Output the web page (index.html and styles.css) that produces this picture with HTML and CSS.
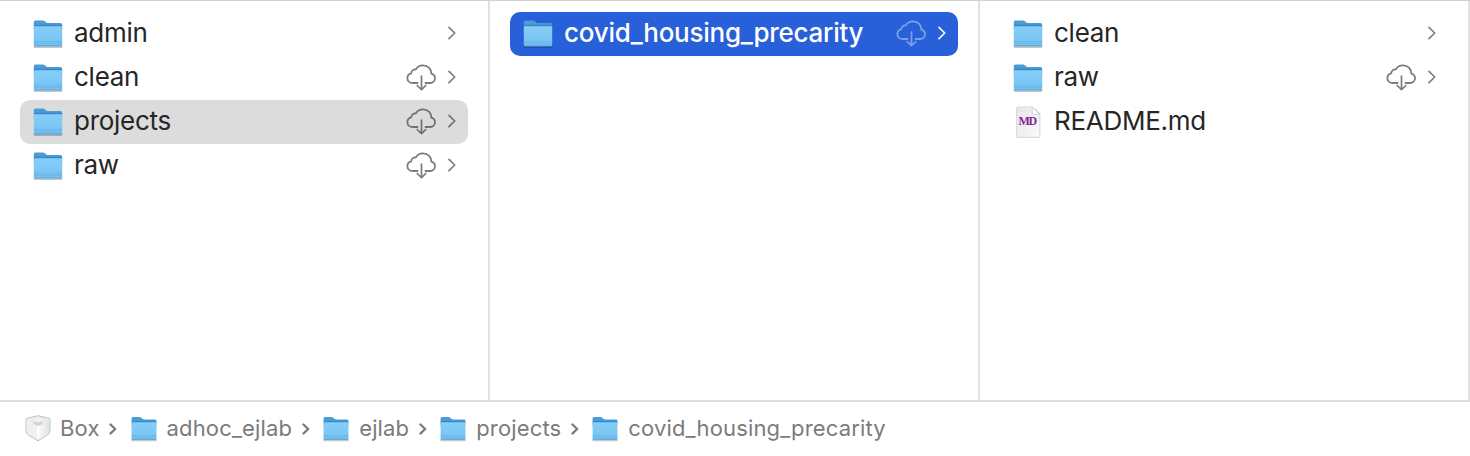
FILE: index.html
```html
<!DOCTYPE html>
<html lang="en">
<head>
<meta charset="utf-8">
<title>Finder</title>
<link rel="stylesheet" href="styles.css">
</head>
<body>
<svg class="defs" aria-hidden="true">
  <defs>
    <linearGradient id="front" x1="0" y1="0" x2="0" y2="1">
      <stop offset="0" stop-color="#85cef9"/><stop offset="1" stop-color="#76c1f1"/>
    </linearGradient>
    <linearGradient id="paper" x1="0" y1="0" x2="1" y2="1">
      <stop offset="0" stop-color="#e6e6e6"/><stop offset="1" stop-color="#fafafa"/>
    </linearGradient>
    <linearGradient id="boxright" x1="0" y1="0" x2="1" y2="0">
      <stop offset="0" stop-color="#fafafa"/><stop offset="1" stop-color="#e2e2e2"/>
    </linearGradient>
    <symbol id="folder" viewBox="0 0 32 32">
      <path d="M1.500 27.500h29v1.600q0 .8-1 .8H2.500q-1 0-1-.8z" fill="#000" opacity=".22"/>
      <path d="M1.800 4.200q0-1.800 1.600-1.800h7.400q1 0 1.800.7l1.700 1.300q.7.600 1.700.6h12.400q1.800 0 1.800 1.700V12H1.800z" fill="#4b9bd6"/>
      <path d="M2.200 6.800h27.600v2H2.200z" fill="#3987ca"/>
      <path d="M1.800 9.500q0-1.200 1.200-1.200h26q1.200 0 1.200 1.200v17.300q0 1.500-1.500 1.500H3.300q-1.500 0-1.500-1.500z" fill="url(#front)"/>
      <path d="M1.800 23.600h28.400M2 25.600h28" stroke="#5ba9df" stroke-width=".5"/>
      <path d="M2.300 27.900h27.400" stroke="#529fd3" stroke-width=".9"/>
    </symbol>
    <symbol id="cloud" viewBox="0 0 30 27">
      <path d="M11.500 19H7C3.600 19 1.400 17 1.400 14.200C1.400 11.800 3 9.900 5.200 9.400C5.200 6.900 7.500 5.100 9.700 5.500C11 3 13.800 1.300 17 1.300C21.800 1.300 25.300 5 25.300 9.600C27.500 10.200 29 12 29 14.300C29 17 26.900 19 24.100 19H19.500" fill="none" stroke="currentColor" stroke-width="1.800" stroke-linecap="round" stroke-linejoin="round"/>
      <path d="M15.500 12.200V25.300M11.200 21.500L15.500 25.600L19.800 21.500" fill="none" stroke="currentColor" stroke-width="1.700" stroke-linecap="round" stroke-linejoin="round"/>
    </symbol>
    <symbol id="chevron" viewBox="0 0 8 14">
      <path d="M1 1.300L6.700 7L1 12.700" fill="none" stroke="currentColor" stroke-width="1.700" stroke-linecap="round" stroke-linejoin="round"/>
    </symbol>
    <symbol id="crumb-chevron" viewBox="0 0 8 12">
      <path d="M1.500 1.500L6.200 6L1.500 10.500" fill="none" stroke="currentColor" stroke-width="2.400" stroke-linecap="round" stroke-linejoin="round"/>
    </symbol>
    <symbol id="document" viewBox="0 0 32 32">
      <path d="M4.300 2h24v28.400q0 1.300-1.300 1.300H5.500q-1.200 0-1.200-1.300z" fill="#000" opacity=".2"/>
      <path d="M4.700 1.800q0-1 1-1h14.500l7.500 7.500v21.700q0 1.200-1.200 1.200H5.900q-1.200 0-1.200-1.200z" fill="url(#paper)" stroke="#d2d2d2" stroke-width=".5"/>
      <path d="M20.700 0h8.300v8.200z" fill="#fff"/>
      <path d="M20.200.8v6q0 1.500 1.500 1.500h6z" fill="#fff" stroke="#c4c4c4" stroke-width=".7"/>
      <text class="doc-label" x="6.600" y="18.500" textLength="17.500" lengthAdjust="spacing">MD</text>
    </symbol>
    <symbol id="box" viewBox="0 0 26 27">
      <path d="M1 4.300Q1 3.600 2 3.300L11.500 1Q13 .6 14.500 1L24 3.300Q25 3.600 25 4.300V15.500Q25 18.500 22.500 20L13 25.800L3.500 20Q1 18.500 1 15.500z" fill="#f3f3f3" stroke="#bdbdbd" stroke-width="1" stroke-linejoin="round"/>
      <path d="M1.800 5.200L13 10V24.800L4 19.400Q1.800 18 1.800 15.500z" fill="#f0f0f0"/>
      <path d="M24.200 5.200L13 10V24.800L22 19.400Q24.200 18 24.200 15.500z" fill="url(#boxright)"/>
      <path d="M1.800 4.700L13 1.500L24.200 4.700L13 10z" fill="#e9e9e9"/>
      <ellipse cx="13" cy="5" rx="4.300" ry="1.800" fill="#f2f2f2"/>
      <path d="M8.700 6v3L13 11l4.300-2V6q-4.300 2.500-8.600 0z" fill="#d2d2d2"/>
      <path d="M13 11v12" stroke="#fff" stroke-width="1.500"/>
    </symbol>
  </defs>
</svg>
<main class="finder">
  <div class="columns">
    <section class="column">
      <div class="row"><svg class="icon"><use href="#folder"/></svg><span class="name">admin</span><svg class="chevron"><use href="#chevron"/></svg></div>
      <div class="row"><svg class="icon"><use href="#folder"/></svg><span class="name">clean</span><svg class="cloud"><use href="#cloud"/></svg><svg class="chevron"><use href="#chevron"/></svg></div>
      <div class="row current"><svg class="icon"><use href="#folder"/></svg><span class="name">projects</span><svg class="cloud"><use href="#cloud"/></svg><svg class="chevron"><use href="#chevron"/></svg></div>
      <div class="row"><svg class="icon"><use href="#folder"/></svg><span class="name">raw</span><svg class="cloud"><use href="#cloud"/></svg><svg class="chevron"><use href="#chevron"/></svg></div>
    </section>
    <section class="column">
      <div class="row selected"><svg class="icon"><use href="#folder"/></svg><span class="name">covid_housing_precarity</span><svg class="cloud"><use href="#cloud"/></svg><svg class="chevron"><use href="#chevron"/></svg></div>
    </section>
    <section class="column">
      <div class="row"><svg class="icon"><use href="#folder"/></svg><span class="name">clean</span><svg class="chevron"><use href="#chevron"/></svg></div>
      <div class="row"><svg class="icon"><use href="#folder"/></svg><span class="name">raw</span><svg class="cloud"><use href="#cloud"/></svg><svg class="chevron"><use href="#chevron"/></svg></div>
      <div class="row"><svg class="icon"><use href="#document"/></svg><span class="name">README.md</span></div>
    </section>
  </div>
  <nav class="pathbar">
    <svg class="box"><use href="#box"/></svg><span class="crumb">Box</span><svg class="sep"><use href="#crumb-chevron"/></svg>
    <svg class="small-folder"><use href="#folder"/></svg><span class="crumb">adhoc_ejlab</span><svg class="sep"><use href="#crumb-chevron"/></svg>
    <svg class="small-folder"><use href="#folder"/></svg><span class="crumb">ejlab</span><svg class="sep"><use href="#crumb-chevron"/></svg>
    <svg class="small-folder"><use href="#folder"/></svg><span class="crumb">projects</span><svg class="sep"><use href="#crumb-chevron"/></svg>
    <svg class="small-folder"><use href="#folder"/></svg><span class="crumb">covid_housing_precarity</span>
  </nav>
</main>
</body>
</html>
```
FILE: styles.css
```css
* { box-sizing: border-box; }
body { margin: 0; background: #fff; font-family: Inter, "Liberation Sans", sans-serif; }
svg { display: block; flex: none; }
.defs { position: absolute; width: 0; height: 0; }
.finder { width: 1470px; height: 456px; display: flex; flex-direction: column; overflow: hidden; }
.columns { display: flex; height: 402px; border-top: 1px solid #d2d2d2; border-bottom: 2px solid #dedede; }
.column { width: 490px; padding: 11px 20px 0; border-right: 2px solid #e2e2e2; }
.row { display: flex; align-items: center; height: 44px; padding: 0 12px; border-radius: 10px; color: #262626; }
.icon { width: 32px; height: 32px; margin-top: -1px; }
.name { flex: 1; height: 44px; margin-left: 10px; font-size: 26px; line-height: 42px; letter-spacing: -.26px; white-space: nowrap; }
.cloud { width: 30px; height: 27px; margin: -1px 12px 0 0; color: #7b7b7b; }
.chevron { width: 8px; height: 14px; margin: -2px .5px 0 0; color: #808080; }
.current .cloud, .current .chevron { color: #707070; }
.current { background: #dcdcdc; }
.selected { background: #2860da; color: #fff; }
.selected .name { font-weight: 500; }
.selected .cloud { color: #7ea0e9; }
.selected .chevron { color: #f2f5fd; }
.doc-label { font: bold 12px "Liberation Serif", serif; letter-spacing: -1px; fill: #8a2297; }
.pathbar { display: flex; align-items: center; height: 54px; padding-left: 25px; color: #7b7b7b; }
.box { width: 26px; height: 27px; margin-top: -1px; }
.crumb { height: 54px; margin-left: 9px; font-size: 22px; letter-spacing: .15px; line-height: 52px; white-space: nowrap; }
.sep { width: 8px; height: 12px; margin: 0 12.5px 0 9.5px; color: #7b7b7b; }
.small-folder { width: 28px; height: 28px; margin-top: -1px; }
```
